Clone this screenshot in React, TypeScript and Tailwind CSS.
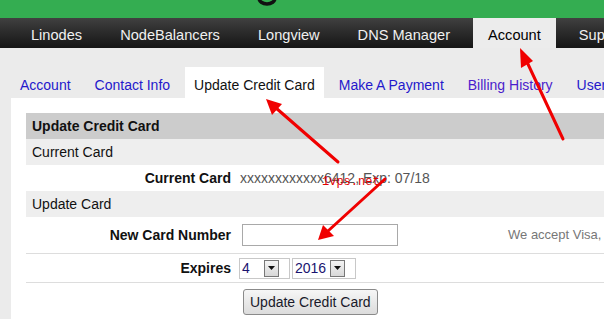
import React from "react";

const navItems = ["Linodes", "NodeBalancers", "Longview", "DNS Manager", "Account", "Support"];
const subTabs = ["Account", "Contact Info", "Update Credit Card", "Make A Payment", "Billing History", "Users"];

const Select = ({ value, width }: { value: string; width: string }) => (
  <div className={`flex h-[21px] shrink-0 items-center border border-[#c8c8c8] bg-white ${width}`}>
    <span className="pl-[2px] text-[#1a1470]">{value}</span>
    <span className="ml-auto mr-[10px] flex h-[17px] w-[15px] items-center justify-center border border-[#777] bg-gradient-to-b from-[#f4f4f4] to-[#d8d8d8]">
      <svg width="7" height="4" viewBox="0 0 7 4">
        <path d="M0 0h7L3.5 4z" fill="#111" />
      </svg>
    </span>
  </div>
);

const App = () => {
  return (
    <div className="relative h-[319px] w-[604px] overflow-hidden bg-[#ebebeb] font-['Liberation_Sans',Arial,sans-serif]">
      {/* top green bar */}
      <div className="relative h-[18px] bg-[#34ad51]">
        <svg className="absolute left-[256px] top-0" width="22" height="8" viewBox="0 0 22 8">
          <ellipse cx="11" cy="-2" rx="8" ry="6" fill="none" stroke="#111" strokeWidth="3.5" />
        </svg>
      </div>

      {/* main nav */}
      <div className="flex h-[30px] items-stretch whitespace-nowrap bg-gradient-to-b from-[#404040] to-[#161616] pl-[12px] text-[14.6px]">
        {navItems.map((n) => (
          <div
            key={n}
            className={`mx-[4px] flex shrink-0 items-center px-[15px] pt-[5px] ${
              n === "Account" ? "bg-[#ececec] text-black" : "text-[#f0f0f0]"
            }`}
          >
            {n}
          </div>
        ))}
      </div>

      {/* sub tabs */}
      <div className="flex h-[50px] items-end whitespace-nowrap pl-[8px] text-[14px]">
        {subTabs.map((t) => (
          <div
            key={t}
            className={`mx-[3px] flex h-[31px] shrink-0 items-center px-[9px] pt-[5px] ${
              t === "Update Credit Card"
                ? "bg-white text-[#111]"
                : t === "Billing History"
                ? "text-[#4a1ccc]"
                : "text-[#2418cc]"
            }`}
          >
            {t}
          </div>
        ))}
      </div>

      {/* content */}
      <div className="ml-[11px] h-[221px] bg-white pl-[15px] pt-[15px] text-[14px] text-[#111]">
        <div className="flex h-[26px] items-center bg-[#cccccc] pl-[6px] font-bold">Update Credit Card</div>
        <div className="flex h-[26px] items-center bg-[#eeeeee] pl-[6px]">Current Card</div>
        <div className="flex h-[26px] items-center whitespace-nowrap">
          <div className="w-[209px] shrink-0 pr-[4px] text-right font-bold">Current Card</div>
          <div className="pl-[5px] text-[#555]">xxxxxxxxxxxx6412, Exp: 07/18</div>
        </div>
        <div className="flex h-[26px] items-center bg-[#eeeeee] pl-[6px]">Update Card</div>
        <div className="flex h-[37px] items-center whitespace-nowrap border-b border-[#dddddd]">
          <div className="w-[209px] shrink-0 pr-[4px] text-right font-bold">New Card Number</div>
          <div className="ml-[7px] h-[22px] w-[156px] shrink-0 border border-[#a9a9a9]" />
          <div className="ml-[110px] shrink-0 text-[13px] text-[#777]">We accept Visa, MasterCard</div>
        </div>
        <div className="flex h-[29px] items-center gap-[2px] border-b border-[#dddddd]">
          <div className="w-[209px] shrink-0 pr-[4px] text-right font-bold">Expires</div>
          <div className="ml-[2px]">
            <Select value="4" width="w-[51px]" />
          </div>
          <Select value="2016" width="w-[64px]" />
        </div>
        <div className="flex h-[36px] items-start pt-[6px]">
          <div className="w-[209px] shrink-0" />
          <button className="ml-[8px] h-[26px] shrink-0 rounded-[3px] border border-[#8a8a8a] bg-gradient-to-b from-[#f6f6f6] to-[#dcdcdc] px-[6px] text-[14px] text-[#1a1a2a]">
            Update Credit Card
          </button>
        </div>
      </div>

      {/* watermark */}
      <div className="absolute left-[322px] top-[176px] font-['Liberation_Mono',monospace] text-[12px] leading-none text-[#e00000]">
        1vps.net
      </div>

      {/* red annotation arrows */}
      <svg className="pointer-events-none absolute left-0 top-0" width="604" height="319">
        <g stroke="#f00000" strokeWidth="3" strokeLinecap="round">
          <line x1="563" y1="139" x2="527" y2="62" />
          <line x1="338" y1="162" x2="276" y2="108" />
          <line x1="385" y1="179" x2="328" y2="231" />
        </g>
        <g fill="#f00000">
          <polygon points="520,48 521,68 533,61" />
          <polygon points="266,99 272,115 282,104" />
          <polygon points="318,240 323,225 334,236" />
        </g>
      </svg>
    </div>
  );
};

export default App;
